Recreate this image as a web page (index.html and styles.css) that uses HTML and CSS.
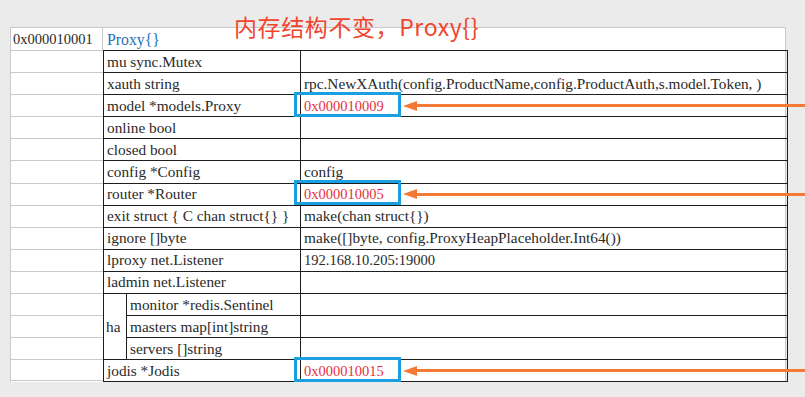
FILE: index.html
```html
<!DOCTYPE html>
<html lang="zh">
<head>
<meta charset="utf-8">
<link rel="stylesheet" href="styles.css">
</head>
<body>
<div class="stage">
  <div class="note">内存结构不变，Proxy{}</div>
  <div class="sheet">
    <div class="head">
      <div class="addr num">0x000010001</div>
      <div class="title">Proxy{}</div>
    </div>
    <div class="body">
      <div class="addr-col">
        <div class="acell"></div><div class="acell"></div><div class="acell"></div>
        <div class="acell"></div><div class="acell"></div><div class="acell"></div>
        <div class="acell"></div><div class="acell"></div><div class="acell"></div>
        <div class="acell"></div><div class="acell"></div><div class="acell"></div>
        <div class="acell"></div><div class="acell"></div><div class="acell last"></div>
      </div>
      <table class="inner">
        <colgroup><col class="c-ha"><col class="c-field"><col class="c-val"></colgroup>
        <tr><td colspan="2">mu sync.Mutex</td><td></td></tr>
        <tr><td colspan="2">xauth string</td><td>rpc.NewXAuth(config.ProductName,config.ProductAuth,s.model.Token, )</td></tr>
        <tr><td colspan="2">model *models.Proxy</td><td class="ref"><span class="ptr num">0x000010009</span></td></tr>
        <tr><td colspan="2">online bool</td><td></td></tr>
        <tr><td colspan="2">closed bool</td><td></td></tr>
        <tr><td colspan="2">config *Config</td><td>config</td></tr>
        <tr><td colspan="2">router *Router</td><td class="ref"><span class="ptr num">0x000010005</span></td></tr>
        <tr><td colspan="2">exit struct { C chan struct{} }</td><td>make(chan struct{})</td></tr>
        <tr><td colspan="2">ignore []byte</td><td>make([]byte, config.ProxyHeapPlaceholder.Int64())</td></tr>
        <tr><td colspan="2">lproxy net.Listener</td><td><span class="num">192.168.10.205:19000</span></td></tr>
        <tr><td colspan="2">ladmin net.Listener</td><td></td></tr>
        <tr><td rowspan="3" class="ha">ha</td><td>monitor *redis.Sentinel</td><td></td></tr>
        <tr><td>masters map[int]string</td><td></td></tr>
        <tr><td>servers []string</td><td></td></tr>
        <tr><td colspan="2">jodis *Jodis</td><td class="ref"><span class="ptr num">0x000010015</span></td></tr>
      </table>
    </div>
  </div>
</div>
</body>
</html>
```
FILE: styles.css
```css
html, body {
  margin: 0;
  padding: 0;
  background: #ebebeb;
  overflow: hidden;
}
.stage {
  position: relative;
  width: 805px;
  height: 397px;
  padding: 27px 0 0 10px;
  box-sizing: border-box;
  font-family: "Liberation Serif", "DejaVu Serif", serif;
  font-size: 15.3px;
  color: #2a2a2a;
}
.num {
  font-size: 14.5px;
}
.note {
  position: absolute;
  left: 234px;
  top: 9px;
  z-index: 3;
  font-family: "Noto Sans CJK SC", "Noto Sans", sans-serif;
  font-size: 23px;
  line-height: 34px;
  letter-spacing: 0.6px;
  color: #f2452e;
  white-space: nowrap;
}
.sheet {
  width: 776px;
  background: #fff;
  border: 1px solid #c9c9c9;
  border-bottom: none;
  box-sizing: border-box;
}
.head {
  display: flex;
  height: 22px;
}
.head .addr {
  width: 92px;
  border-right: 1px solid #c9c9c9;
  padding-left: 2px;
  line-height: 23px;
  box-sizing: border-box;
  flex: none;
}
.head .title {
  padding-left: 4px;
  line-height: 23px;
  font-size: 15.8px;
  color: #1f6fb4;
}
.body {
  display: flex;
}
.addr-col {
  width: 92px;
  flex: none;
}
.acell {
  height: 22.1px;
  border-top: 1px solid #c9c9c9;
  box-sizing: border-box;
}
.acell.last {
  border-bottom: 1px solid #c9c9c9;
}
.inner {
  border-collapse: collapse;
  width: 684px;
  margin-right: -1px;
  table-layout: fixed;
}
.c-ha { width: 23px; }
.c-field { width: 174px; }
.c-val { width: 487px; }
.inner td {
  border: 1px solid #1e1e1e;
  height: 22.1px;
  padding: 0 0 0 3px;
  box-sizing: border-box;
  white-space: nowrap;
  overflow: visible;
  line-height: 20px;
  vertical-align: middle;
}
.inner td.ha {
  padding-left: 2px;
}
.inner td.ref {
  position: relative;
}
.ptr {
  display: inline-block;
  position: relative;
  color: #e5323e;
}
.ptr::before {
  content: "";
  position: absolute;
  left: -10px;
  top: -4px;
  width: 107px;
  height: 25px;
  border: 3px solid #1aa0e0;
  box-sizing: border-box;
}
.inner td.ref::before {
  content: "";
  position: absolute;
  left: 110px;
  top: 50%;
  margin-top: -1.5px;
  width: 420px;
  height: 3px;
  background: #f27a36;
  z-index: 2;
}
.inner td.ref::after {
  content: "";
  position: absolute;
  left: 102px;
  top: 50%;
  margin-top: -5px;
  width: 0;
  height: 0;
  border-top: 5px solid transparent;
  border-bottom: 5px solid transparent;
  border-right: 14px solid #f27a36;
  z-index: 2;
}
```
